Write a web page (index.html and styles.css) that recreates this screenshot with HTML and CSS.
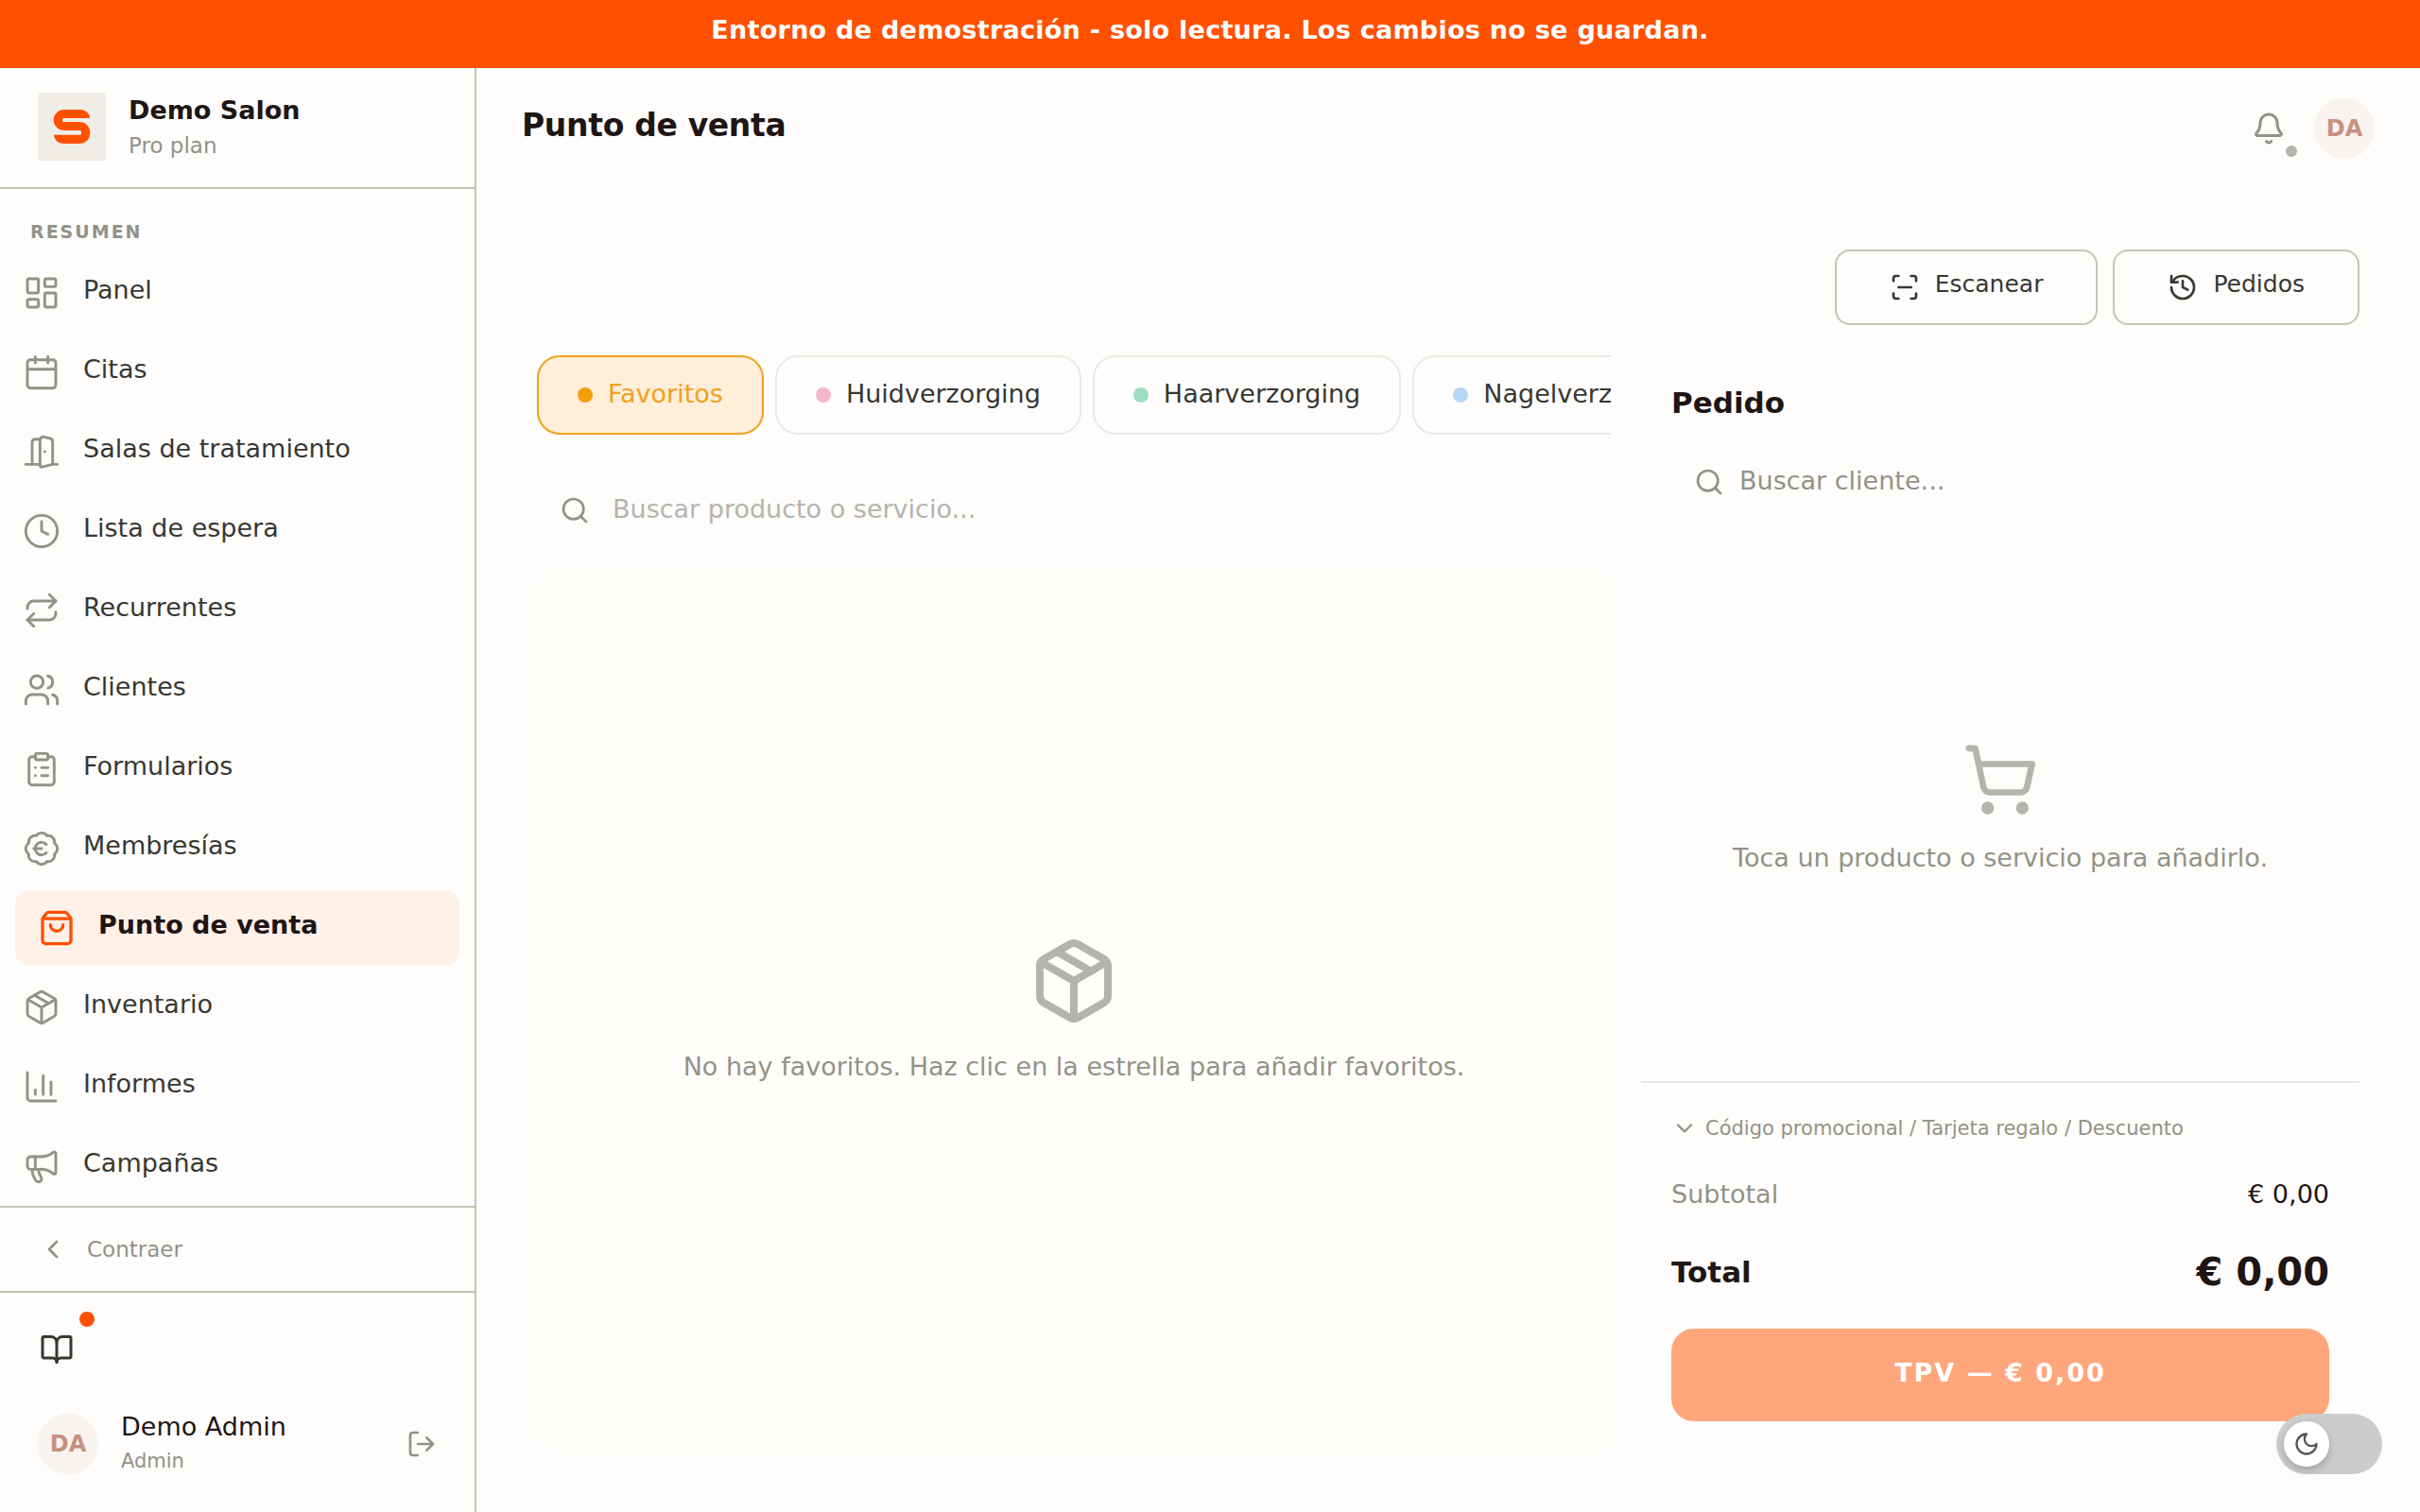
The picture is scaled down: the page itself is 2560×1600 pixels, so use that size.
FILE: index.html
```html
<!DOCTYPE html>
<html lang="es">
<head>
  <meta charset="UTF-8">
  <title>Punto de venta</title>
  <link rel="stylesheet" href="styles.css">
</head>
<body>
  <div class="demo-banner">Entorno de demostración - solo lectura. Los cambios no se guardan.</div>

  <div class="app">
    <aside class="sidebar">
      <div class="brand">
        <div class="brand-logo">
          <svg viewBox="0 0 72 72">
            <path d="M28 18h17.5a9.5 9 0 0 1 9.5 9H27.5a1.5 1.5 0 0 0-1.5 1.5v1a1.5 1.5 0 0 0 1.5 1.5H44a11.3 11.3 0 0 1 11.3 11.3v.7A11 11 0 0 1 44 54H27a10 9.3 0 0 1-10-9.3h27.5a1.5 1.5 0 0 0 1.5-1.5v-1.7a1.5 1.5 0 0 0-1.5-1.5H28a11.3 11 0 0 1 0-22z" />
          </svg>
        </div>
        <div>
          <div class="brand-name">Demo Salon</div>
          <div class="brand-plan">Pro plan</div>
        </div>
      </div>

      <nav class="nav">
        <div class="nav-title">RESUMEN</div>
        <a href="#" class="nav-item">
          <svg class="icon" viewBox="0 0 24 24"><rect x="3" y="3" width="7" height="9" rx="1" /><rect x="14" y="3" width="7" height="5" rx="1" /><rect x="14" y="12" width="7" height="9" rx="1" /><rect x="3" y="16" width="7" height="5" rx="1" /></svg>
          <span>Panel</span>
        </a>
        <a href="#" class="nav-item">
          <svg class="icon" viewBox="0 0 24 24"><path d="M8 2v4M16 2v4M3 10h18" /><rect x="3" y="4" width="18" height="18" rx="2" /></svg>
          <span>Citas</span>
        </a>
        <a href="#" class="nav-item">
          <svg class="icon" viewBox="0 0 24 24"><path d="M11 20H2" /><path d="M11 4.562v16.157a1 1 0 0 0 1.242.97L19 20V5.562a2 2 0 0 0-1.515-1.94l-4-1A2 2 0 0 0 11 4.561z" /><path d="M11 4H8a2 2 0 0 0-2 2v14" /><path d="M14 12h.01M22 20h-3" /></svg>
          <span>Salas de tratamiento</span>
        </a>
        <a href="#" class="nav-item">
          <svg class="icon" viewBox="0 0 24 24"><circle cx="12" cy="12" r="10" /><path d="M12 6v6l4 2" /></svg>
          <span>Lista de espera</span>
        </a>
        <a href="#" class="nav-item">
          <svg class="icon" viewBox="0 0 24 24"><path d="m17 2 4 4-4 4" /><path d="M3 11v-1a4 4 0 0 1 4-4h14" /><path d="m7 22-4-4 4-4" /><path d="M21 13v1a4 4 0 0 1-4 4H3" /></svg>
          <span>Recurrentes</span>
        </a>
        <a href="#" class="nav-item">
          <svg class="icon" viewBox="0 0 24 24"><path d="M16 21v-2a4 4 0 0 0-4-4H6a4 4 0 0 0-4 4v2" /><path d="M16 3.128a4 4 0 0 1 0 7.744" /><path d="M22 21v-2a4 4 0 0 0-3-3.87" /><circle cx="9" cy="7" r="4" /></svg>
          <span>Clientes</span>
        </a>
        <a href="#" class="nav-item">
          <svg class="icon" viewBox="0 0 24 24"><rect x="8" y="2" width="8" height="4" rx="1" /><path d="M16 4h2a2 2 0 0 1 2 2v14a2 2 0 0 1-2 2H6a2 2 0 0 1-2-2V6a2 2 0 0 1 2-2h2" /><path d="M12 11h4M12 16h4M8 11h.01M8 16h.01" /></svg>
          <span>Formularios</span>
        </a>
        <a href="#" class="nav-item">
          <svg class="icon" viewBox="0 0 24 24"><path d="M3.85 8.62a4 4 0 0 1 4.78-4.77 4 4 0 0 1 6.74 0 4 4 0 0 1 4.78 4.78 4 4 0 0 1 0 6.74 4 4 0 0 1-4.77 4.78 4 4 0 0 1-6.75 0 4 4 0 0 1-4.78-4.77 4 4 0 0 1 0-6.76Z" /><path d="M7 12h5" /><path d="M15 9.4a4 4 0 1 0 0 5.2" /></svg>
          <span>Membresías</span>
        </a>
        <a href="#" class="nav-item active">
          <svg class="icon" viewBox="0 0 24 24"><path d="M16 10a4 4 0 0 1-8 0" /><path d="M3.103 6.034h17.794" /><path d="M3.4 5.467a2 2 0 0 0-.4 1.2V20a2 2 0 0 0 2 2h14a2 2 0 0 0 2-2V6.667a2 2 0 0 0-.4-1.2l-2-2.667A2 2 0 0 0 17 2H7a2 2 0 0 0-1.6.8z" /></svg>
          <span>Punto de venta</span>
        </a>
        <a href="#" class="nav-item">
          <svg class="icon" viewBox="0 0 24 24"><path d="M11 21.73a2 2 0 0 0 2 0l7-4A2 2 0 0 0 21 16V8a2 2 0 0 0-1-1.73l-7-4a2 2 0 0 0-2 0l-7 4A2 2 0 0 0 3 8v8a2 2 0 0 0 1 1.73z" /><path d="M12 22V12" /><path d="M3.29 7 12 12l8.71-5" /><path d="m7.5 4.27 9 5.15" /></svg>
          <span>Inventario</span>
        </a>
        <a href="#" class="nav-item">
          <svg class="icon" viewBox="0 0 24 24"><path d="M3 3v16a2 2 0 0 0 2 2h16" /><path d="M18 17V9M13 17V5M8 17v-3" /></svg>
          <span>Informes</span>
        </a>
        <a href="#" class="nav-item">
          <svg class="icon" viewBox="0 0 24 24"><path d="M11 6a13 13 0 0 0 8.4-2.8A1 1 0 0 1 21 4v12a1 1 0 0 1-1.6.8A13 13 0 0 0 11 14H5a2 2 0 0 1-2-2V8a2 2 0 0 1 2-2z" /><path d="M6 14a12 12 0 0 0 2.4 7.2 2 2 0 0 0 3.2-2.4A8 8 0 0 1 10 14" /><path d="M8 6v8" /></svg>
          <span>Campañas</span>
        </a>
      </nav>

      <button type="button" class="collapse">
        <svg class="icon" viewBox="0 0 24 24"><path d="m15 18-6-6 6-6" /></svg>
        Contraer
      </button>

      <div class="sidebar-footer">
        <button type="button" class="guide" aria-label="Guía">
          <svg class="icon" viewBox="0 0 24 24"><path d="M12 7v14" /><path d="M3 18a1 1 0 0 1-1-1V4a1 1 0 0 1 1-1h5a4 4 0 0 1 4 4 4 4 0 0 1 4-4h5a1 1 0 0 1 1 1v13a1 1 0 0 1-1 1h-6a3 3 0 0 0-3 3 3 3 0 0 0-3-3z" /></svg>
          <span class="guide-dot"></span>
        </button>
        <div class="user">
          <div class="avatar">DA</div>
          <div class="user-info">
            <div class="user-name">Demo Admin</div>
            <div class="user-role">Admin</div>
          </div>
          <button type="button" class="logout" aria-label="Cerrar sesión">
            <svg class="icon" viewBox="0 0 24 24"><path d="m16 17 5-5-5-5" /><path d="M21 12H9" /><path d="M9 21H5a2 2 0 0 1-2-2V5a2 2 0 0 1 2-2h4" /></svg>
          </button>
        </div>
      </div>
    </aside>

    <main class="main">
      <header class="topbar">
        <h1>Punto de venta</h1>
        <button type="button" class="bell" aria-label="Notificaciones">
          <svg class="icon" viewBox="0 0 24 24"><path d="M10.268 21a2 2 0 0 0 3.464 0" /><path d="M3.262 15.326A1 1 0 0 0 4 17h16a1 1 0 0 0 .74-1.673C19.41 13.956 18 12.499 18 8A6 6 0 0 0 6 8c0 4.499-1.411 5.956-2.738 7.326" /></svg>
          <span class="bell-dot"></span>
        </button>
        <div class="avatar">DA</div>
      </header>

      <div class="content">
        <div class="actions">
          <button type="button" class="btn">
            <svg class="icon" viewBox="0 0 24 24"><path d="M3 7V5a2 2 0 0 1 2-2h2M17 3h2a2 2 0 0 1 2 2v2M21 17v2a2 2 0 0 1-2 2h-2M7 21H5a2 2 0 0 1-2-2v-2M7 12h10" /></svg>
            <span>Escanear</span>
          </button>
          <button type="button" class="btn">
            <svg class="icon" viewBox="0 0 24 24"><path d="M3 12a9 9 0 1 0 9-9 9.75 9.75 0 0 0-6.74 2.74L3 8" /><path d="M3 3v5h5" /><path d="M12 7v5l4 2" /></svg>
            <span>Pedidos</span>
          </button>
        </div>

        <div class="pos">
          <section class="catalog">
            <div class="tabs">
              <button type="button" class="tab selected"><span class="dot orange"></span><span class="tab-label">Favoritos</span></button>
              <button type="button" class="tab"><span class="dot pink"></span><span class="tab-label">Huidverzorging</span></button>
              <button type="button" class="tab"><span class="dot green"></span><span class="tab-label">Haarverzorging</span></button>
              <button type="button" class="tab"><span class="dot blue"></span><span class="tab-label">Nagelverzorging</span></button>
            </div>

            <label class="search">
              <svg class="icon" viewBox="0 0 24 24"><circle cx="11" cy="11" r="8" /><path d="m21 21-4.34-4.34" /></svg>
              <input type="text" placeholder="Buscar producto o servicio..." aria-label="Buscar producto o servicio">
            </label>

            <div class="products">
              <svg class="icon" viewBox="0 0 24 24"><path d="M11 21.73a2 2 0 0 0 2 0l7-4A2 2 0 0 0 21 16V8a2 2 0 0 0-1-1.73l-7-4a2 2 0 0 0-2 0l-7 4A2 2 0 0 0 3 8v8a2 2 0 0 0 1 1.73z" /><path d="M12 22V12" /><path d="M3.29 7 12 12l8.71-5" /><path d="m7.5 4.27 9 5.15" /></svg>
              <p>No hay favoritos. Haz clic en la estrella para añadir favoritos.</p>
            </div>
          </section>

          <section class="order">
            <h2>Pedido</h2>
            <label class="search client-search">
              <svg class="icon" viewBox="0 0 24 24"><circle cx="11" cy="11" r="8" /><path d="m21 21-4.34-4.34" /></svg>
              <input type="text" placeholder="Buscar cliente..." aria-label="Buscar cliente">
            </label>

            <div class="cart-empty">
              <svg class="icon" viewBox="0 0 24 24"><circle cx="8" cy="21" r="1" /><circle cx="19" cy="21" r="1" /><path d="M2.05 2.05h2l2.66 12.42a2 2 0 0 0 2 1.58h9.78a2 2 0 0 0 1.95-1.57l1.65-7.43H5.12" /></svg>
              <p>Toca un producto o servicio para añadirlo.</p>
            </div>

            <div class="summary">
              <button type="button" class="promo">
                <svg class="icon" viewBox="0 0 24 24"><path d="m6 9 6 6 6-6" /></svg>
                Código promocional / Tarjeta regalo / Descuento
              </button>
              <div class="row subtotal"><span>Subtotal</span><span>€ 0,00</span></div>
              <div class="row total"><span>Total</span><span class="amount">€ 0,00</span></div>
              <button type="button" class="pay">TPV — € 0,00</button>
            </div>
          </section>
        </div>
      </div>
    </main>
  </div>

  <button type="button" class="theme-toggle" aria-label="Modo oscuro">
    <span class="knob">
      <svg class="icon" viewBox="0 0 24 24"><path d="M12 3a6 6 0 0 0 9 9 9 9 0 1 1-9-9Z" /></svg>
    </span>
  </button>
</body>
</html>
```

FILE: styles.css
```css
* {
  box-sizing: border-box;
}

body {
  margin: 0;
  height: 100vh;
  display: flex;
  flex-direction: column;
  background: #fefdfb;
  color: #1f1514;
  font-family: "DejaVu Sans", sans-serif;
  font-size: 27px;
  line-height: 40px;
}

button,
input {
  font: inherit;
  color: inherit;
  background: none;
  border: none;
  padding: 0;
}

h1, h2, p {
  margin: 0;
}

.icon {
  flex-shrink: 0;
  display: block;
  width: 32px;
  height: 32px;
  fill: none;
  stroke: currentColor;
  stroke-width: 2;
  stroke-linecap: round;
  stroke-linejoin: round;
}

.demo-banner {
  height: 72px;
  padding-top: 12px;
  background: #ff5000;
  color: #fff;
  font-size: 27px;
  font-weight: bold;
  letter-spacing: 0.01em;
  text-align: center;
}

.app {
  flex: 1;
  min-height: 0;
  display: flex;
}

/* Sidebar */
.sidebar {
  width: 504px;
  flex-shrink: 0;
  display: flex;
  flex-direction: column;
  border-right: 2px solid #c4c4b4;
}

.brand {
  display: flex;
  gap: 24px;
  height: 128px;
  padding: 26px 40px 0;
  border-bottom: 2px solid #c4c4b4;
}

.brand-logo {
  width: 72px;
  height: 72px;
  background: #f0ede6;
}

.brand-logo svg {
  display: block;
  fill: #ff5000;
}

.brand-name {
  line-height: 38px;
  font-weight: bold;
}

.brand-plan {
  font-size: 23px;
  line-height: 36px;
  color: #929286;
}

.nav {
  flex: 1;
  min-height: 0;
  overflow: hidden;
  display: flex;
  flex-direction: column;
  gap: 4px;
  padding-top: 25px;
}

.nav-title {
  padding: 0 32px;
  height: 41px;
  font-size: 19px;
  font-weight: bold;
  letter-spacing: 2px;
  color: #929286;
}

.nav-item {
  flex-shrink: 0;
  display: flex;
  align-items: center;
  gap: 24px;
  height: 80px;
  padding: 0 24px;
  color: #373733;
  text-decoration: none;
}

.nav-item .icon {
  width: 40px;
  height: 40px;
  stroke-width: 1.75;
  color: #929286;
}

.nav-item span {
  padding-bottom: 6px;
}

.nav-item.active {
  margin: 0 16px;
  border-radius: 16px;
  background: #fff0e8;
  color: #1f1514;
  font-weight: bold;
}

.nav-item.active .icon {
  color: #ff5000;
  stroke-width: 2;
}

.collapse {
  display: flex;
  align-items: center;
  gap: 20px;
  height: 90px;
  padding: 0 40px;
  border-top: 2px solid #c4c4b4;
  font-size: 23px;
  color: #929286;
}

.sidebar-footer {
  height: 234px;
  padding: 20px 40px 0;
  border-top: 2px solid #c4c4b4;
}

.guide {
  position: relative;
  display: block;
  padding: 22px 2px;
}

.guide .icon {
  width: 36px;
  height: 36px;
  color: #373733;
}

.guide-dot {
  position: absolute;
  top: 0;
  left: 44px;
  width: 16px;
  height: 16px;
  border-radius: 50%;
  background: #ff5000;
}

.user {
  display: flex;
  align-items: center;
  gap: 24px;
  margin-top: 24px;
}

.avatar {
  width: 64px;
  height: 64px;
  border-radius: 50%;
  background: #f8f3ef;
  color: #c6917f;
  font-size: 24px;
  font-weight: bold;
  line-height: 64px;
  text-align: center;
}

.user-info {
  flex: 1;
}

.user-name {
  line-height: 36px;
}

.user-role {
  font-size: 21px;
  line-height: 36px;
  color: #929286;
}

.logout {
  color: #929286;
}

/* Main */
.main {
  flex: 1;
  min-width: 0;
  display: flex;
  flex-direction: column;
}

.topbar {
  display: flex;
  align-items: center;
  height: 128px;
  padding: 0 48px;
}

h1 {
  flex: 1;
  padding-bottom: 6px;
  font-size: 33px;
  letter-spacing: -0.01em;
}

.bell {
  position: relative;
  padding: 12px;
  margin-right: 18px;
  color: #929286;
}

.bell .icon {
  width: 36px;
  height: 36px;
}

.bell-dot {
  position: absolute;
  right: 0;
  bottom: 0;
  width: 12px;
  height: 12px;
  border-radius: 50%;
  background: #b4b4ae;
}

.content {
  flex: 1;
  min-height: 0;
  display: flex;
  flex-direction: column;
  gap: 32px;
  padding: 64px;
}

.actions {
  display: flex;
  justify-content: flex-end;
  gap: 16px;
}

.btn {
  display: flex;
  align-items: center;
  gap: 16px;
  height: 80px;
  padding: 0 56px;
  border: 2px solid #c4c4b4;
  border-radius: 16px;
  font-size: 25px;
  color: #373733;
}

.btn span {
  padding-bottom: 6px;
}

.pos {
  flex: 1;
  min-height: 0;
  display: grid;
  grid-template-columns: 1fr 760px;
  gap: 32px;
}

.catalog {
  min-width: 0;
  display: flex;
  flex-direction: column;
}

.tabs {
  display: flex;
  gap: 12px;
  overflow: hidden;
}

.tab {
  flex-shrink: 0;
  display: flex;
  align-items: center;
  gap: 16px;
  height: 84px;
  padding: 0 41px;
  border: 2px solid #e9e9e5;
  border-radius: 24px;
  color: #373733;
}

.tab.selected {
  border-color: #f0a020;
  background: #ffeed8;
  color: #f0a020;
}

.tab-label {
  padding-bottom: 2px;
}

.dot {
  width: 16px;
  height: 16px;
  border-radius: 50%;
}

.orange {
  background: #f59e0b;
}

.pink {
  background: #f5b5cb;
}

.green {
  background: #9fdcc4;
}

.blue {
  background: #b5d7f6;
}

.search {
  display: flex;
  align-items: center;
  gap: 24px;
  height: 88px;
  margin: 36px 0 16px;
  padding: 0 24px;
  color: #929286;
}

.search input {
  flex: 1;
  min-width: 0;
  padding-bottom: 2px;
  outline: none;
}

.search input::placeholder {
  color: #b4b4ae;
  opacity: 1;
}

.products,
.cart-empty {
  flex: 1;
  display: flex;
  flex-direction: column;
  align-items: center;
  justify-content: center;
  gap: 26px;
  line-height: 34px;
  color: #929286;
}

.products {
  border-radius: 24px;
  background: #fffefb;
}

.products .icon {
  width: 96px;
  height: 96px;
  color: #b4b4ac;
}

/* Order */
.order {
  display: flex;
  flex-direction: column;
}

.order h2 {
  padding: 30px 32px 20px;
  font-size: 31px;
}

.client-search {
  gap: 16px;
  margin: 0 32px;
}

.client-search input::placeholder {
  color: #929286;
}

.cart-empty {
  padding-top: 12px;
}

.cart-empty .icon {
  width: 80px;
  height: 80px;
  color: #b4b4ac;
}

.summary {
  padding: 28px 32px 32px;
  border-top: 2px solid #e9e9e5;
}

.promo {
  display: flex;
  align-items: center;
  gap: 8px;
  font-size: 21px;
  color: #929286;
}

.promo .icon {
  width: 28px;
  height: 28px;
}

.row {
  display: flex;
  align-items: center;
  justify-content: space-between;
}

.subtotal {
  margin-top: 30px;
}

.subtotal span:first-child {
  color: #929286;
}

.total {
  margin: 42px 0 40px;
  font-size: 31px;
  font-weight: bold;
}

.amount {
  font-size: 40px;
}

.pay {
  width: 100%;
  height: 98px;
  padding-bottom: 4px;
  border-radius: 24px;
  background: #ffa67c;
  color: #fff;
  font-weight: bold;
  letter-spacing: 2px;
}

/* Floats over the page corner */
.theme-toggle {
  position: fixed;
  right: 40px;
  bottom: 40px;
  width: 112px;
  height: 64px;
  padding: 8px;
  border-radius: 32px;
  background: #ccc;
}

.knob {
  display: grid;
  place-items: center;
  width: 48px;
  height: 48px;
  border-radius: 50%;
  background: #fff;
  box-shadow: 0 4px 8px rgba(0, 0, 0, 0.2);
}

.knob .icon {
  width: 28px;
  height: 28px;
  color: #555;
}
```
